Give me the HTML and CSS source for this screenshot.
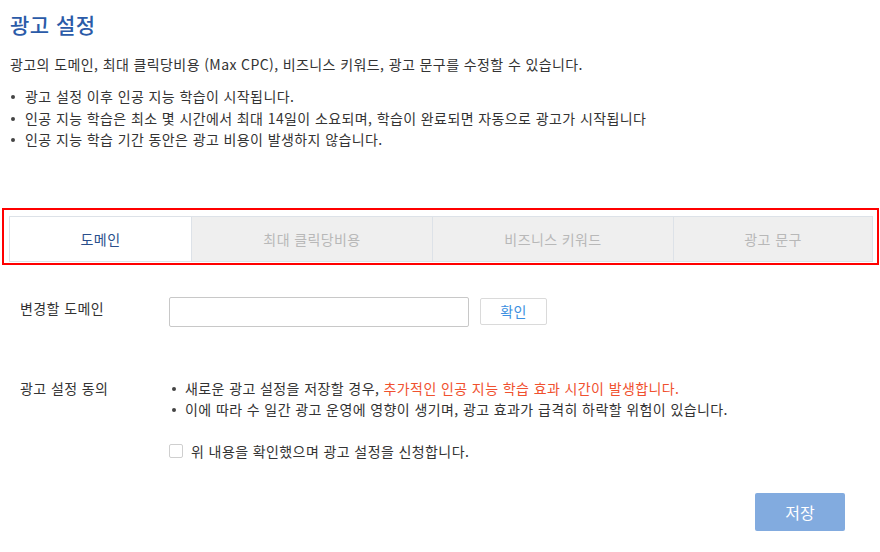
FILE: index.html
```html
<!DOCTYPE html>
<html lang="ko">
<head>
  <meta charset="UTF-8">
  <title>광고 설정</title>
  <link rel="stylesheet" href="styles.css">
</head>
<body>
  <div class="page">
    <h1 class="title">광고 설정</h1>
    <p class="desc">광고의 도메인, 최대 클릭당비용 (Max CPC), 비즈니스 키워드, 광고 문구를 수정할 수 있습니다.</p>
    <ul class="notes">
      <li>광고 설정 이후 인공 지능 학습이 시작됩니다.</li>
      <li>인공 지능 학습은 최소 몇 시간에서 최대 14일이 소요되며, 학습이 완료되면 자동으로 광고가 시작됩니다</li>
      <li>인공 지능 학습 기간 동안은 광고 비용이 발생하지 않습니다.</li>
    </ul>
  </div>

  <div class="tab-frame">
    <div class="tabs">
      <div class="tab tab-1 active">도메인</div>
      <div class="tab tab-2">최대 클릭당비용</div>
      <div class="tab tab-3">비즈니스 키워드</div>
      <div class="tab tab-4">광고 문구</div>
    </div>
  </div>

  <div class="form">
    <div class="row domain-row">
      <div class="label">변경할 도메인</div>
      <div class="field">
        <input type="text" class="domain-input">
        <button class="btn-check">확인</button>
      </div>
    </div>

    <div class="row agree-row">
      <div class="label">광고 설정 동의</div>
      <div class="field agree">
        <ul class="agree-list">
          <li>새로운 광고 설정을 저장할 경우, <span class="warn">추가적인 인공 지능 학습 효과 시간이 발생합니다.</span></li>
          <li>이에 따라 수 일간 광고 운영에 영향이 생기며, 광고 효과가 급격히 하락할 위험이 있습니다.</li>
        </ul>
        <label class="confirm">
          <span class="box"></span>
          위 내용을 확인했으며 광고 설정을 신청합니다.
        </label>
      </div>
    </div>

    <div class="actions">
      <button class="btn-save">저장</button>
    </div>
  </div>
</body>
</html>
```

FILE: styles.css
```css
body {
  margin: 0;
  background: #fff;
  color: #333;
  font-family: "Noto Sans CJK KR", "Noto Sans", sans-serif;
  font-size: 14px;
  letter-spacing: 0.4px;
}
.page {
  padding: 12px 10px 0 10px;
}
.title {
  margin: 0;
  font-size: 21px;
  line-height: 24px;
  font-weight: 500;
  letter-spacing: 0.5px;
  color: #2b5ba8;
}
.desc {
  margin: 18px 0 0 0;
  line-height: 20px;
}
.notes {
  margin: 12px 0 0 0;
  padding: 0;
  list-style: none;
}
.notes li,
.agree-list li {
  position: relative;
  padding-left: 15px;
  line-height: 21.5px;
}
.notes li::before,
.agree-list li::before {
  content: "";
  position: absolute;
  left: 1px;
  top: 9px;
  width: 4px;
  height: 4px;
  border-radius: 50%;
  background: #444;
}

.tab-frame {
  margin: 57px 1px 0 2px;
  border: 2px solid #f00;
  padding: 6px 4px 1px 5px;
}
.tabs {
  display: flex;
  border: 1px solid #dde2e8;
  height: 44px;
}
.tab {
  display: flex;
  align-items: center;
  justify-content: center;
  background: #efefef;
  color: #b8b8b8;
  border-left: 1px solid #dde2e8;
}
.tab-1 { width: 181px; border-left: none; }
.tab-2 { width: 240px; }
.tab-3 { width: 240px; }
.tab-4 { flex: 1; }
.tab.active {
  background: #fff;
  color: #2a4f8c;
}

.form {
  padding: 0 35px 0 20px;
}
.row {
  display: flex;
}
.label {
  width: 149px;
  flex-shrink: 0;
  line-height: 20px;
}
.domain-row {
  margin-top: 32px;
}
.domain-row .label {
  padding-top: 1px;
}
.field {
  display: flex;
  align-items: flex-start;
}
.domain-input {
  width: 300px;
  height: 30px;
  box-sizing: border-box;
  border: 1px solid #c8c8c8;
  border-radius: 2px;
  margin: 0;
  padding: 0 8px;
  font-family: inherit;
}
.btn-check {
  margin: 1px 0 0 11px;
  width: 67px;
  height: 27px;
  border: 1px solid #dadada;
  border-radius: 2px;
  background: #fff;
  color: #3c8fe0;
  font-family: inherit;
  font-size: 14px;
  letter-spacing: 0.4px;
}

.agree-row {
  margin-top: 51px;
}
.agree {
  flex-direction: column;
}
.agree-list {
  margin: 0;
  padding: 0 0 0 2px;
  list-style: none;
}
.agree-list li {
  padding-left: 14px;
}
.warn {
  color: #f0512f;
}
.confirm {
  display: flex;
  align-items: center;
  gap: 8px;
  margin-top: 20px;
  line-height: 20px;
  color: #333;
}
.box {
  width: 12px;
  height: 12px;
  border: 1px solid #cfcfcf;
  border-radius: 2px;
  background: #fff;
}

.actions {
  display: flex;
  justify-content: flex-end;
  margin-top: 32px;
}
.btn-save {
  width: 90px;
  height: 38px;
  border: none;
  border-radius: 2px;
  background: #82abdf;
  color: #fff;
  font-family: inherit;
  font-size: 16px;
}
```
